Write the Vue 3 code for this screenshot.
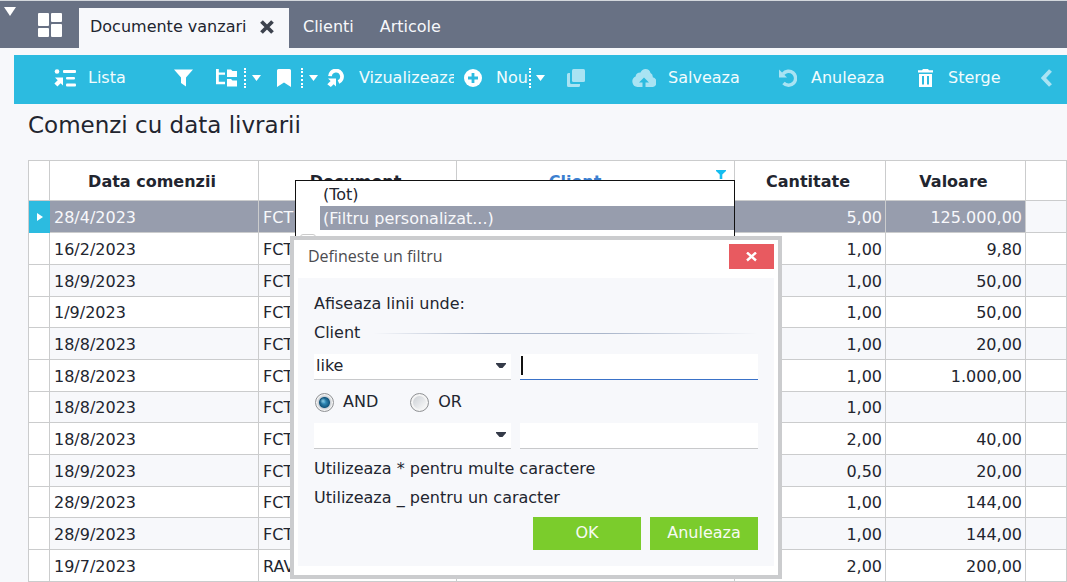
<script setup>
import { ref } from 'vue'

const rows = [
  ['28/4/2023', 'FCT', '5,00', '125.000,00'],
  ['16/2/2023', 'FCT', '1,00', '9,80'],
  ['18/9/2023', 'FCT', '1,00', '50,00'],
  ['1/9/2023', 'FCT', '1,00', '50,00'],
  ['18/8/2023', 'FCT', '1,00', '20,00'],
  ['18/8/2023', 'FCT', '1,00', '1.000,00'],
  ['18/8/2023', 'FCT', '1,00', ''],
  ['18/8/2023', 'FCT', '2,00', '40,00'],
  ['18/9/2023', 'FCT', '0,50', '20,00'],
  ['28/9/2023', 'FCT', '1,00', '144,00'],
  ['28/9/2023', 'FCT', '1,00', '144,00'],
  ['19/7/2023', 'RAV', '2,00', '200,00'],
]
const selected = ref(0)
const operator = ref('like')
const operator2 = ref('')
const value = ref('')
const value2 = ref('')
const joiner = ref('AND')
</script>

<template>
  <div class="page">
    <header class="tabs">
      <button class="corner" aria-label="Meniu">
        <svg width="12" height="9" viewBox="0 0 12 9"><path d="M0 0h12L6 9z" fill="#fff" /></svg>
      </button>
      <button class="home" aria-label="Panou">
        <svg width="24" height="24" viewBox="0 0 24 24" fill="#fff">
          <rect x="0" y="0" width="11" height="13" rx="1" />
          <rect x="13" y="0" width="11" height="9" rx="1" />
          <rect x="0" y="15" width="11" height="9" rx="1" />
          <rect x="13" y="11" width="11" height="13" rx="1" />
        </svg>
      </button>
      <nav class="tablist">
        <div class="tab active">
          <a href="#documente">Documente vanzari</a>
          <button class="tabclose" aria-label="Inchide">
            <svg width="14" height="14" viewBox="0 0 14 14"><path d="M1.500 1.500l11 11M12.500 1.500l-11 11" stroke="#3d434e" stroke-width="3.800" /></svg>
          </button>
        </div>
        <a class="tab" href="#clienti">Clienti</a>
        <a class="tab" href="#articole">Articole</a>
      </nav>
    </header>

    <div class="toolbar" role="toolbar">
      <button class="tool tight">
        <svg width="22" height="18" viewBox="0 0 22 18" fill="#fff">
          <circle cx="3" cy="2.500" r="2.300" />
          <rect x="9" y="1" width="13" height="3" rx="1" />
          <rect x="12" y="8" width="9" height="2.600" rx="1" />
          <rect x="12" y="14.600" width="10" height="2.800" rx="1" />
          <path d="M1 8.500h8v8L6.700 14.200 3.400 17.500.400 14.600l3.300-3.300z" />
        </svg>
        <span>Lista</span>
      </button>
      <button class="tool" aria-label="Filtru">
        <svg width="20" height="18" viewBox="0 0 20 18"><path d="M0 .500h19L12 8.500v9L7 14V8.500z" fill="#fff" /></svg>
      </button>
      <button class="tool split" aria-label="Grupare">
        <svg width="22" height="18" viewBox="0 0 22 18" fill="#fff">
          <path d="M0 0h2.800v3.500H9v2.300H2.800v7H9v2.400H0z" />
          <path d="M11 .500h4l1.500 1.500H21v6H11zM11 10h4l1.500 1.500H21v6H11z" />
        </svg>
        <i class="dots"></i>
        <svg class="caret" width="9" height="6" viewBox="0 0 9 6"><path d="M0 0h9L4.500 6z" fill="#fff" /></svg>
      </button>
      <button class="tool split wide" aria-label="Marcaj">
        <svg width="14" height="18" viewBox="0 0 14 18"><path d="M1.500 0h11Q14 0 14 1.500V18l-7-4.500L0 18V1.500Q0 0 1.500 0z" fill="#fff" /></svg>
        <i class="dots"></i>
        <svg class="caret" width="9" height="6" viewBox="0 0 9 6"><path d="M0 0h9L4.500 6z" fill="#fff" /></svg>
      </button>
      <button class="tool">
        <svg width="18" height="18" viewBox="0 0 18 18">
          <path d="M3 7.200A6 6 0 1 1 11.500 13" fill="none" stroke="#fff" stroke-width="3.800" />
          <path d="M1 9.500h8v8L6.700 15.200 3.800 18 .300 15.200l3.300-3.200z" fill="#fff" />
        </svg>
        <span class="clip">Vizualizeaza</span>
      </button>
      <button class="tool">
        <svg width="18" height="18" viewBox="0 0 18 18">
          <circle cx="9" cy="9" r="9" fill="#fff" />
          <path d="M9 4v10M4 9h10" stroke="#2cbbe0" stroke-width="2.800" />
        </svg>
        <span>Nou</span>
        <i class="dots after"></i>
        <svg class="caret" width="9" height="6" viewBox="0 0 9 6"><path d="M0 0h9L4.500 6z" fill="#fff" /></svg>
      </button>
      <button class="tool" aria-label="Copiaza">
        <svg width="18" height="18" viewBox="0 0 18 18" fill="#a9e3f3">
          <rect x="5" y="0" width="13" height="13" rx="1.500" />
          <path d="M0 5.500Q0 4 1.500 4H3v9.500Q3 15 4.500 15H13v1.500Q13 18 11.500 18h-10Q0 18 0 16.500z" />
        </svg>
      </button>
      <button class="tool tight">
        <svg width="24" height="18" viewBox="0 0 24 18">
          <path d="M5.500 18A5.500 5.500 0 0 1 3.600 7.500Q4 3.500 8.500 3.500 10 0 13.500 0q4 0 5 4 2.500 1 2.300 4.200A5 5 0 0 1 18.500 18z" fill="#a9e3f3" />
          <path d="M12 8.500l5 5h-3.500V18h-3v-4.500H7z" fill="#2cbbe0" />
        </svg>
        <span>Salveaza</span>
      </button>
      <button class="tool">
        <svg width="18" height="18" viewBox="0 0 18 18">
          <path d="M4 5A7 7 0 1 1 4.500 14" fill="none" stroke="#a9e3f3" stroke-width="3.400" />
          <path d="M0 .500v8h8z" fill="#a9e3f3" />
        </svg>
        <span>Anuleaza</span>
      </button>
      <button class="tool">
        <svg width="16" height="18" viewBox="0 0 16 18" fill="#fff">
          <path d="M5 0h5l1 1.300h4V3.500H0V1.300h4z" />
          <path fill-rule="evenodd" d="M1 5h13v13H1zM4 7v8.500h2V7zM9 7v8.500h2V7z" />
        </svg>
        <span>Sterge</span>
      </button>
      <button class="tool" aria-label="Inapoi">
        <svg width="12" height="18" viewBox="0 0 12 18"><path d="M9.500 1.500L2.500 9l7 7.500" fill="none" stroke="#a9e3f3" stroke-width="4" /></svg>
      </button>
    </div>

    <main>
      <h1>Comenzi cu data livrarii</h1>
      <div class="gridwrap">
        <table>
          <colgroup>
            <col class="c-mark" /><col class="c-date" /><col class="c-doc" /><col class="c-client" />
            <col class="c-qty" /><col class="c-val" /><col />
          </colgroup>
          <thead>
            <tr>
              <th></th>
              <th>Data comenzii</th>
              <th>Document</th>
              <th class="filtered">Client
                <svg class="funnel" width="10" height="9" viewBox="0 0 10 9"><path d="M0 0h10v1L6.300 4.500V9H3.700V4.500L0 1z" fill="#15bdf0" /></svg>
              </th>
              <th>Cantitate</th>
              <th>Valoare</th>
              <th></th>
            </tr>
          </thead>
          <tbody>
            <tr v-for="(r, i) in rows" :key="i" :class="{ current: i === selected }" @click="selected = i">
              <td class="mark">
                <svg v-if="i === selected" width="6" height="8" viewBox="0 0 6 8"><path d="M0 0l6 4-6 4z" fill="#fff" /></svg>
              </td>
              <td>{{ r[0] }}</td>
              <td>{{ r[1] }}</td>
              <td></td>
              <td class="num">{{ r[2] }}</td>
              <td class="num">{{ r[3] }}</td>
              <td class="rest"></td>
            </tr>
          </tbody>
        </table>
      </div>
    </main>

    <div class="menu" role="listbox">
      <div role="option">(Tot)</div>
      <div role="option" class="hot" aria-selected="true">(Filtru personalizat...)</div>
      <i class="box"></i>
    </div>

    <form class="dialog" role="dialog" aria-labelledby="dlg" @submit.prevent>
      <div class="titlebar">
        <span id="dlg">Defineste un filtru</span>
        <button type="button" class="close" aria-label="Inchide">
          <svg width="12" height="10" viewBox="0 0 12 10"><path d="M1 .500l9 8M10 .500l-9 8" stroke="#fff" stroke-width="2.400" /></svg>
        </button>
      </div>
      <div class="panel">
        <p>Afiseaza linii unde:</p>
        <p class="legend"><span>Client</span><i></i></p>
        <div class="fields">
          <div class="combo">
            <select v-model="operator" aria-label="Operator"><option>like</option></select>
            <svg width="10" height="6" viewBox="0 0 10 6"><path d="M0 0h10v1L6.500 5h-3L0 1z" fill="#343a48" /></svg>
          </div>
          <div class="entry focus">
            <input v-model="value" type="text" aria-label="Valoare" />
            <i class="cursor"></i>
          </div>
        </div>
        <div class="radios">
          <label><input v-model="joiner" type="radio" name="join" value="AND" />AND</label>
          <label><input v-model="joiner" type="radio" name="join" value="OR" />OR</label>
        </div>
        <div class="fields">
          <div class="combo">
            <select v-model="operator2" aria-label="Al doilea operator"><option value=""></option></select>
            <svg width="10" height="6" viewBox="0 0 10 6"><path d="M0 0h10v1L6.500 5h-3L0 1z" fill="#343a48" /></svg>
          </div>
          <div class="entry">
            <input v-model="value2" type="text" aria-label="A doua valoare" />
          </div>
        </div>
        <p class="hint">Utilizeaza * pentru multe caractere</p>
        <p class="last">Utilizeaza _ pentru un caracter</p>
        <div class="actions">
          <button type="submit">OK</button>
          <button type="button">Anuleaza</button>
        </div>
      </div>
    </form>
  </div>
</template>

<style>
body {
  overflow: hidden;
}
</style>

<style scoped>
.page,
.page * {
  box-sizing: border-box;
}
.page {
  position: relative;
  min-height: 100vh;
  background: #f7f8fb;
  color: #22252f;
  font: 16px/20px "DejaVu Sans", Verdana, sans-serif;
}
button {
  border: 0;
  padding: 0;
  background: none;
  color: inherit;
  font: inherit;
}
svg {
  display: block;
  flex: none;
}
a {
  color: inherit;
  text-decoration: none;
}
.tabs {
  display: flex;
  height: 48px;
  background: #687184;
  border-top: 1px solid #d3d7dc;
  color: #f7f8fb;
}
.corner {
  width: 20px;
  padding: 6px 4px 0;
  align-self: flex-start;
}
.home {
  width: 59px;
  padding-left: 18px;
}
.tablist {
  display: flex;
  align-items: flex-end;
}
.tab {
  display: flex;
  align-items: center;
  gap: 14px;
  height: 40px;
  padding: 0 14px 2px;
}
.tab.active {
  width: 210px;
  padding: 0 0 2px 11px;
  background: #f7f8fb;
  color: #22252f;
}
.tab + .tab {
  padding-right: 12px;
}
.toolbar {
  display: grid;
  grid-template-columns: 120px 42px 61px 50px 137px 103px 65px 147px 139px 123px 1fr;
  height: 49px;
  margin: 7px 0 0 14px;
  padding: 0 0 3px 40px;
  background: #2cbbe0;
  color: #f2fbfd;
}
.tool {
  display: flex;
  align-items: center;
  gap: 14px;
  white-space: nowrap;
}
.tool.tight {
  gap: 12px;
}
.tool.split {
  gap: 6px;
}
.tool.split.wide {
  gap: 0;
}
.wide .dots {
  margin: 0 6px 0 10px;
}
.dots {
  flex: none;
  height: 20px;
  border-left: 2px dotted #fff;
}
.dots.after {
  margin: 0 -9px 0 -13px;
}
.clip {
  width: 95px;
  overflow: hidden;
  text-align: left;
}
h1 {
  margin: 0;
  padding: 7px 0 21px 28px;
  font-size: 23px;
  line-height: 28px;
  font-weight: 400;
}
.gridwrap {
  padding-left: 28px;
}
table {
  width: 100%;
  table-layout: fixed;
  border-spacing: 0;
  border: solid #cbcccd;
  border-width: 1px 0 0 1px;
}
.c-mark { width: 21px; }
.c-date { width: 209px; }
.c-doc { width: 198px; }
.c-client { width: 278px; }
.c-qty { width: 151px; }
.c-val { width: 140px; }
th,
td {
  padding: 2px 4px 0;
  border: solid #cbcccd;
  border-width: 0 1px 1px 0;
  background: #fff;
}
th {
  height: 40px;
  padding-right: 8px;
}
td {
  height: 32px;
}
tr:nth-child(3n + 4) td {
  height: 31px;
}
tr:nth-child(odd) td {
  background: #f7f8fb;
}
tr:nth-child(odd) td.mark {
  background: #fff;
}
tr.current td:not(.rest) {
  background: #979dad;
  color: #f7f8fb;
}
tr.current td.mark:not(.rest) {
  padding: 0 0 0 8px;
  border-color: #2cbbe0;
  background: #2cbbe0;
}
th.filtered {
  position: relative;
  padding-right: 45px;
  color: #3c7fd0;
}
.funnel {
  position: absolute;
  top: 9px;
  right: 8px;
}
td.num {
  padding-right: 3px;
  text-align: right;
}
.menu {
  position: absolute;
  top: 180px;
  left: 295px;
  width: 440px;
  height: 80px;
  padding: 1px 0 0 24px;
  border: 1px solid #111;
  background: #fff;
}
.menu div {
  height: 24px;
  padding: 2px 0 0 3px;
  line-height: 22px;
}
.menu .hot {
  background: #979dad;
  color: #f7f8fb;
}
.box {
  position: absolute;
  top: 53px;
  left: 4px;
  width: 16px;
  height: 16px;
  border: 1px solid #ccc;
  border-radius: 3px;
}
.dialog {
  position: absolute;
  top: 236px;
  left: 290px;
  width: 492px;
  padding: 0 4px 9px;
  border: 4px solid #cbccce;
  background: #fff;
}
.titlebar {
  display: flex;
  align-items: flex-start;
  justify-content: space-between;
  height: 38px;
  padding: 4px 0 0 10px;
  font-family: "Open Sans", "Noto Sans", sans-serif;
  line-height: 24px;
  color: #4c4c50;
}
.close {
  display: flex;
  align-items: center;
  justify-content: center;
  width: 45px;
  height: 25px;
  background: #e85a60;
}
.panel {
  padding: 16px;
  background: #f7f8fb;
}
p {
  margin: 0 0 9px;
}
.legend {
  display: flex;
  align-items: center;
  gap: 13px;
  margin-bottom: 11px;
}
.legend i {
  flex: 1;
  height: 1px;
  background: linear-gradient(90deg, transparent, #aab6cb 30%, #aab6cb 60%, transparent);
}
.fields {
  display: grid;
  grid-template-columns: 197px 1fr;
  gap: 9px;
}
.combo,
.entry {
  position: relative;
  height: 26px;
}
.combo svg {
  position: absolute;
  top: 9px;
  right: 5px;
  pointer-events: none;
}
select,
input[type="text"] {
  display: block;
  width: 100%;
  height: 26px;
  margin: 0;
  padding: 0 2px 1px;
  border: 0;
  border-bottom: 1px solid #c8c9cb;
  border-radius: 0;
  outline: 0;
  appearance: none;
  background: #fff;
  color: inherit;
  font: inherit;
}
.focus input[type="text"] {
  border-color: #3a72c8;
}
.cursor {
  position: absolute;
  top: 2px;
  left: 1px;
  width: 2px;
  height: 19px;
  background: #111;
}
.radios {
  display: flex;
  gap: 31px;
  padding: 12px 0 11px;
}
.radios label {
  display: flex;
  align-items: center;
  gap: 9px;
  height: 20px;
}
input[type="radio"] {
  width: 19px;
  height: 19px;
  margin: 0 0 0 1px;
  padding: 2px;
  border: 1px solid #8f9194;
  border-radius: 50%;
  appearance: none;
  background: linear-gradient(135deg, #ccd0d5, #fafafa) content-box, #f4f4f4;
}
input[type="radio"]:checked {
  padding: 0;
  background:
    radial-gradient(circle at 7px 7px, #a5e0f5cc 0, transparent 3px),
    radial-gradient(circle at center, #3c9cca 0, #14577f 5px, #c9ced4 6px, #f4f4f4 8px);
}
.hint {
  margin-top: 10px;
}
.last {
  margin-bottom: 9px;
}
.actions {
  display: flex;
  justify-content: flex-end;
  gap: 9px;
}
.actions button {
  width: 108px;
  height: 33px;
  padding-bottom: 1px;
  background: #7bcc2c;
  color: #f7fbf2;
}
</style>
